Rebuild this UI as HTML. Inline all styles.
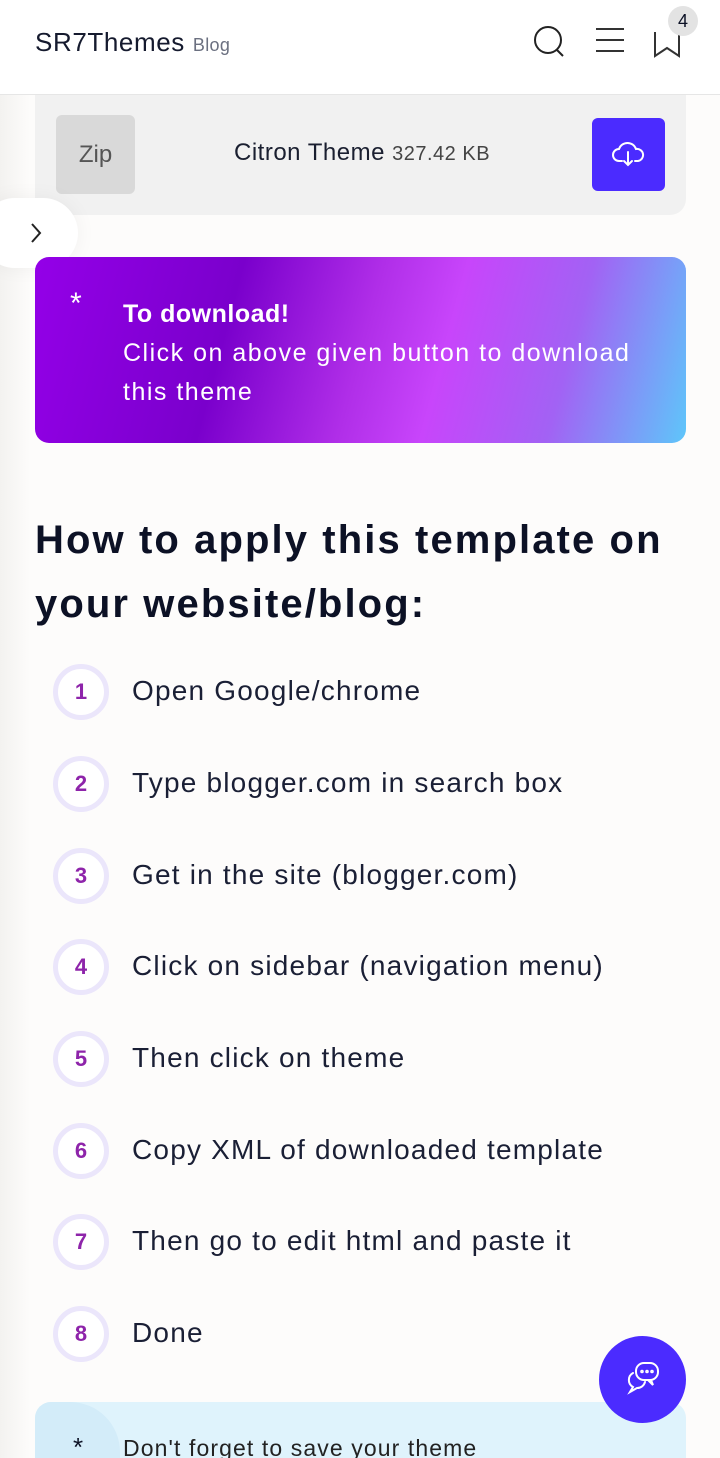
<!DOCTYPE html>
<html><head><meta charset="utf-8"><style>
*{margin:0;padding:0;box-sizing:border-box}
html,body{width:720px;height:1458px;overflow:hidden}
body{background:#fdfcfb;font-family:"Liberation Sans",sans-serif;color:#0c1125;position:relative}
.hdr{position:absolute;top:0;left:0;width:720px;height:95px;background:#fff;border-bottom:1px solid #e6e6e6}
.logo{position:absolute;left:35px;top:27px;font-size:26px;color:#151a2e;letter-spacing:.6px}
.logo small{font-size:18px;color:#6b7080;margin-left:8px;letter-spacing:.3px}
.side{position:absolute;left:0;top:95px;width:30px;height:1363px;background:linear-gradient(90deg,#f3f2f0,#fdfcfb)}
.zip{position:absolute;left:35px;top:95px;width:651px;height:120px;background:#f1f1f1;border-radius:0 0 16px 16px}
.zipb{position:absolute;left:21px;top:20px;width:79px;height:79px;background:#d9d9d9;border-radius:6px;font-size:24px;color:#555;text-align:center;line-height:79px}
.zt{position:absolute;left:199px;top:44px;font-size:24px;color:#1a1f30;letter-spacing:.5px}
.zt span{font-size:20px;color:#444}
.dl{position:absolute;left:557px;top:23px;width:73px;height:73px;background:#4b2bff;border-radius:6px}
.tab{position:absolute;left:-20px;top:198px;width:98px;height:70px;background:#fff;border-radius:35px;box-shadow:0 0 20px rgba(0,0,0,.05)}
.grad{position:absolute;left:35px;top:257px;width:651px;height:186px;border-radius:14px;background:linear-gradient(105deg,#9400e8 0%,#7a00cc 30%,#b02ee8 50%,#c845fb 62%,#a262f4 80%,#5ec6fa 100%);color:#fff}
.grad .st{position:absolute;left:35px;top:30px;font-size:30px}
.grad .tx{position:absolute;left:88px;top:38px;font-size:25px;line-height:39px;letter-spacing:1.5px}
.grad .tx b{letter-spacing:.5px}
h1{position:absolute;left:35px;top:508px;font-size:40px;line-height:64px;font-weight:bold;color:#0c1125;width:680px;letter-spacing:2.1px}
.step{position:absolute;left:53px;width:640px;height:56px}
.c{position:absolute;left:0;top:0;width:56px;height:56px;border-radius:50%;border:5px solid #ebe6fb;background:#fff;color:#8e24aa;font-size:22px;font-weight:bold;text-align:center;line-height:46px}
.step p{position:absolute;left:79px;top:11px;font-size:28px;color:#1a1f35;white-space:nowrap;letter-spacing:1.2px}
.note{position:absolute;left:35px;top:1402px;width:651px;height:80px;background:#dff3fc;border-radius:16px;overflow:hidden}
.note .b{position:absolute;left:-30px;top:0;width:115px;height:80px;background:#d3ecf9;border-radius:0 50px 0 0}
.note .st{position:absolute;left:38px;top:30px;font-size:26px}
.note .t{position:absolute;left:88px;top:33px;font-size:23px;color:#222;letter-spacing:1.1px}
.chat{position:absolute;left:599px;top:1336px;width:87px;height:87px;border-radius:50%;background:#4b2bff}
</style></head><body>
<div class="hdr">
<div class="logo">SR7Themes<small>Blog</small></div>
<svg style="position:absolute;left:533px;top:25px" width="34" height="34" viewBox="0 0 34 34" fill="none" stroke="#222" stroke-width="2"><circle cx="15" cy="15" r="13"/><path d="M24 25l6 6"/></svg>
<svg style="position:absolute;left:595px;top:27px" width="30" height="26" viewBox="0 0 30 26" stroke="#333" stroke-width="2"><path d="M1 2h28M1 13h28M1 24h28"/></svg>
<svg style="position:absolute;left:652px;top:22px" width="34" height="36" viewBox="0 0 34 36" fill="none" stroke="#333" stroke-width="2"><path d="M3 10v24l12-8 12 8V10"/></svg>
<div style="position:absolute;left:668px;top:6px;width:30px;height:30px;border-radius:50%;background:#e3e3e3;text-align:center;line-height:30px;font-size:18px">4</div>
</div>
<div class="side"></div>
<div class="zip"><div class="zipb">Zip</div><div class="zt">Citron Theme <span>327.42 KB</span></div>
<div class="dl"><svg style="position:absolute;left:20px;top:21px" width="33" height="30" viewBox="0 0 33 30" fill="none" stroke="#fff" stroke-width="2" stroke-linecap="round"><path d="M10 22H7a6 6 0 0 1 0-12 9 9 0 0 1 17 0 6 6 0 0 1 2 12h-3"/><path d="M16 13v13M12 22l4 4 4-4"/></svg></div></div>
<div class="tab"><svg style="position:absolute;left:50px;top:25px" width="12" height="20" viewBox="0 0 12 20" fill="none" stroke="#222" stroke-width="2"><path d="M2 1l8 9-8 9"/></svg></div>
<div class="grad"><div class="st">*</div><div class="tx"><b>To download!</b><br>Click on above given button to download<br>this theme</div></div>
<h1>How to apply this template on your website/blog:</h1>
<div class="step" style="top:664px"><div class="c">1</div><p>Open Google/chrome</p></div>
<div class="step" style="top:756px"><div class="c">2</div><p>Type blogger.com in search box</p></div>
<div class="step" style="top:848px"><div class="c">3</div><p>Get in the site (blogger.com)</p></div>
<div class="step" style="top:939px"><div class="c">4</div><p>Click on sidebar (navigation menu)</p></div>
<div class="step" style="top:1031px"><div class="c">5</div><p>Then click on theme</p></div>
<div class="step" style="top:1123px"><div class="c">6</div><p>Copy XML of downloaded template</p></div>
<div class="step" style="top:1214px"><div class="c">7</div><p>Then go to edit html and paste it</p></div>
<div class="step" style="top:1306px"><div class="c">8</div><p>Done</p></div>
<div class="note"><div class="b"></div><div class="st">*</div><div class="t">Don't forget to save your theme</div></div>
<div class="chat"><svg style="position:absolute;left:24px;top:25px" width="38" height="36" viewBox="0 0 38 36" fill="none" stroke="#fff" stroke-width="2" stroke-linecap="round"><rect x="13" y="2" width="22" height="17" rx="8"/><path d="M28 19l2 5-5-5"/><path d="M10 12a8 8 0 0 0 0 14l-3 5 7-4a8 8 0 0 0 8-6"/><circle cx="19" cy="10.5" r=".8"/><circle cx="24" cy="10.5" r=".8"/><circle cx="29" cy="10.5" r=".8"/></svg></div>
</body></html>
